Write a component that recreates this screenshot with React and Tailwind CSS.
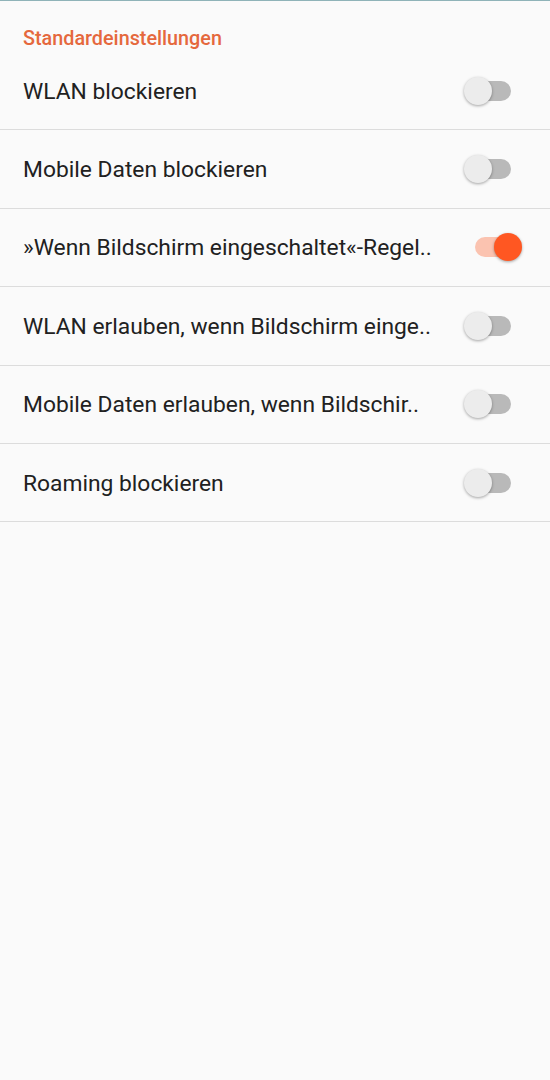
import { useState } from 'react'

const initialRows = [
  { id: 'wifi', label: 'WLAN blockieren', on: false },
  { id: 'mobile', label: 'Mobile Daten blockieren', on: false },
  { id: 'screen', label: '»Wenn Bildschirm eingeschaltet«-Regel..', on: true },
  { id: 'wifiScreen', label: 'WLAN erlauben, wenn Bildschirm einge..', on: false },
  { id: 'mobileScreen', label: 'Mobile Daten erlauben, wenn Bildschir..', on: false },
  { id: 'roaming', label: 'Roaming blockieren', on: false }
]

function Toggle({ on, onClick }) {
  return (
    <button onClick={onClick} className="relative w-[36px] h-[20px] shrink-0">
      <span
        className={`absolute inset-0 rounded-full ${on ? 'bg-[#fbc3b0]' : 'bg-[#b9b9b9]'}`}
      />
      <span
        className={`absolute top-[-4px] w-[28px] h-[28px] rounded-full shadow-[0_1px_3px_rgba(0,0,0,0.35)] ${
          on ? 'left-[19px] bg-[#ff5722]' : 'left-[-11px] bg-[#ececec]'
        }`}
      />
    </button>
  )
}

export default function App() {
  const [rows, setRows] = useState(initialRows)

  const toggle = (id) => {
    setRows(rows.map((r) => (r.id === id ? { ...r, on: !r.on } : r)))
  }

  return (
    <div className="min-h-[1080px] bg-[#fafafa] border-t border-[#8fb3b8] font-['Roboto',sans-serif]">
      <div className="h-[51px] px-[23px] pt-[26px]">
        <h2 className="text-[19.8px] leading-[24px] font-medium text-[#e5683d]">Standardeinstellungen</h2>
      </div>

      {rows.map((row) => (
        <div
          key={row.id}
          className="h-[78.4px] flex items-center justify-between pl-[23px] pr-[39px] border-b-[1.5px] border-[#dcdcdc]"
        >
          <span className="text-[22.8px] text-[#212121] whitespace-nowrap pt-[2px]">{row.label}</span>
          <Toggle on={row.on} onClick={() => toggle(row.id)} />
        </div>
      ))}
    </div>
  )
}
